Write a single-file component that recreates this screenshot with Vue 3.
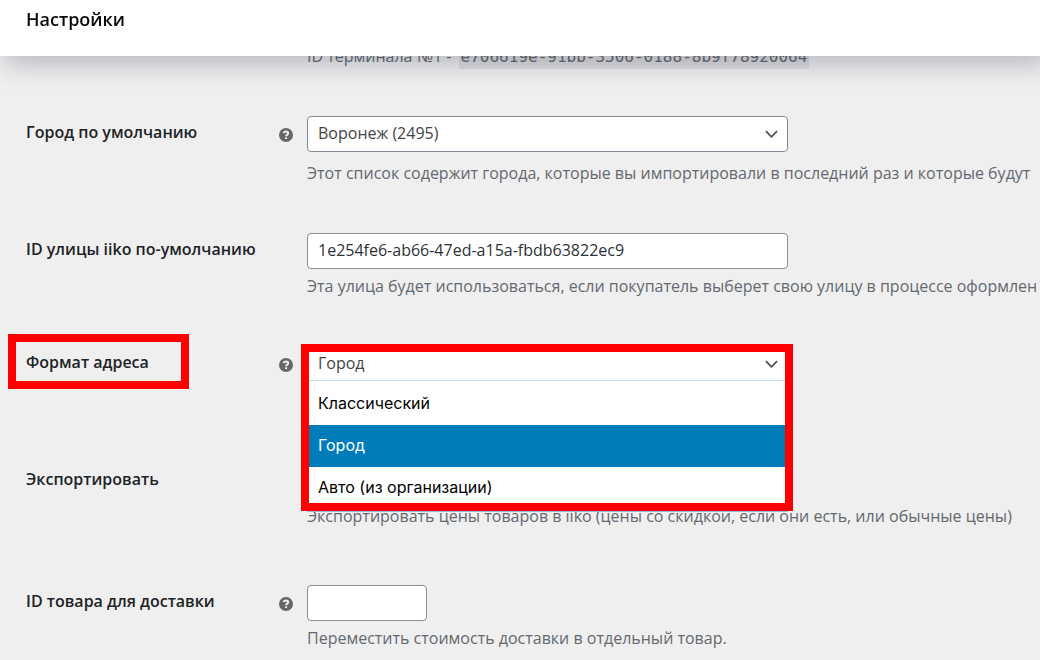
<script setup>
import { ref } from 'vue'

const terminalId = 'e706619e-91bb-3506-0188-8b9f78920064'
const city = ref('voronezh')
const street = ref('1e254fe6-ab66-47ed-a15a-fbdb63822ec9')
const format = ref('city')
const product = ref('')
const formats = [
  { value: 'classic', label: 'Классический' },
  { value: 'city', label: 'Город' },
  { value: 'auto', label: 'Авто (из организации)' },
]
</script>

<template>
  <div class="page">
    <header class="topbar">
      <h1>Настройки</h1>
    </header>

    <form class="form" @submit.prevent>
      <div class="row">
        <p class="desc terminal">ID терминала №1 - <code>{{ terminalId }}</code></p>
      </div>

      <div class="row">
        <label class="name" for="city">Город по умолчанию</label>
        <button class="help" type="button" aria-label="Справка: город">
          <svg viewBox="0 0 14 14"><circle cx="7" cy="7" r="7" /><path d="M4.7 5.2C4.9 4 5.8 3.5 7 3.5s2.2.6 2.2 1.7c0 1.4-2.1 1.4-2.1 3M7.1 9.2v1.8" /></svg>
        </button>
        <div class="field">
          <div class="select">
            <select id="city" v-model="city">
              <option value="voronezh">Воронеж (2495)</option>
            </select>
            <svg class="chevron" viewBox="0 0 14 8"><path d="M1 1l6 6 6-6" /></svg>
          </div>
          <p class="desc after-select">Этот список содержит города, которые вы импортировали в последний раз и которые будут</p>
        </div>
      </div>

      <div class="row">
        <label class="name" for="street">ID улицы iiko по-умолчанию</label>
        <div class="field">
          <input id="street" v-model="street" type="text" />
          <p class="desc">Эта улица будет использоваться, если покупатель выберет свою улицу в процессе оформлен</p>
        </div>
      </div>

      <div class="row row-format">
        <label class="name marked" for="format">Формат адреса</label>
        <button class="help" type="button" aria-label="Справка: формат">
          <svg viewBox="0 0 14 14"><circle cx="7" cy="7" r="7" /><path d="M4.7 5.2C4.9 4 5.8 3.5 7 3.5s2.2.6 2.2 1.7c0 1.4-2.1 1.4-2.1 3M7.1 9.2v1.8" /></svg>
        </button>
        <div class="field">
          <div class="select open">
            <select id="format" v-model="format">
              <option v-for="f in formats" :key="f.value" :value="f.value">{{ f.label }}</option>
            </select>
            <svg class="chevron" viewBox="0 0 14 8"><path d="M1 1l6 6 6-6" /></svg>
            <ul class="menu" role="listbox" aria-label="Формат адреса">
              <li
                v-for="f in formats"
                :key="f.value"
                role="option"
                :aria-selected="f.value === format"
                :class="{ active: f.value === format }"
                @click="format = f.value"
              >{{ f.label }}</li>
            </ul>
          </div>
        </div>
      </div>

      <div class="row row-export">
        <span class="name">Экспортировать</span>
        <div class="field">
          <p class="desc">Экспортировать цены товаров в iiko (цены со скидкой, если они есть, или обычные цены)</p>
        </div>
      </div>

      <div class="row">
        <label class="name" for="product">ID товара для доставки</label>
        <button class="help" type="button" aria-label="Справка: товар">
          <svg viewBox="0 0 14 14"><circle cx="7" cy="7" r="7" /><path d="M4.7 5.2C4.9 4 5.8 3.5 7 3.5s2.2.6 2.2 1.7c0 1.4-2.1 1.4-2.1 3M7.1 9.2v1.8" /></svg>
        </button>
        <div class="field">
          <input id="product" v-model="product" class="short" type="text" />
          <p class="desc">Переместить стоимость доставки в отдельный товар.</p>
        </div>
      </div>
    </form>
  </div>
</template>

<style>
body {
  margin: 0;
  background: #efefef;
  overflow: hidden;
}
</style>

<style scoped>
.page {
  min-height: 100vh;
  overflow: hidden;
  background: #efefef;
  color: #1d2327;
  font: 16px/24px "Open Sans", "Noto Sans", sans-serif;
}
.topbar {
  position: fixed;
  z-index: 5;
  top: 0;
  left: 0;
  right: 0;
  height: 56px;
  padding: 0 26px;
  box-sizing: border-box;
  background: #fff;
  box-shadow: 6px 6px 26px 2px rgba(40, 44, 70, 0.28);
}
h1 {
  margin: 0;
  color: #0a0a0a;
  font-size: 18px;
  font-weight: 600;
  line-height: 38px;
}
.form {
  padding: 45px 0 9px 26px;
}
.row {
  display: grid;
  grid-template-columns: 253px 28px minmax(0, 1fr);
  align-items: start;
  margin-bottom: 47px;
}
.row:last-child {
  margin-bottom: 0;
}
.row-format {
  min-height: 70px;
}
.row-export {
  min-height: 75px;
}
.row-export .desc {
  margin-top: 41px;
}
.name {
  grid-column: 1;
  justify-self: start;
  margin-top: 4px;
  font-weight: 600;
  white-space: nowrap;
}
.marked {
  position: relative;
}
.marked::after {
  content: "";
  position: absolute;
  top: -16px;
  left: -18px;
  width: 165px;
  height: 39px;
  border: 8px solid #f00;
}
.help {
  grid-column: 2;
  width: 14px;
  height: 14px;
  margin-top: 12px;
  padding: 0;
  border: 0;
  background: none;
}
.help svg {
  display: block;
  width: 14px;
  height: 14px;
  fill: #666;
}
.help path {
  fill: none;
  stroke: #efefef;
  stroke-width: 2;
}
.field {
  grid-column: 3;
}
.desc {
  margin: 5px 0 1px;
  color: #646970;
  white-space: nowrap;
}
.after-select {
  margin-top: 9px;
}
.terminal {
  grid-column: 3;
  margin: -1px 0 1px;
}
code {
  margin-left: 3px;
  padding: 4px 2px 3px;
  background: #dfdfdf;
  font: 16px/19px "DejaVu Sans Mono", monospace;
}
input,
select {
  display: block;
  box-sizing: border-box;
  width: 100%;
  height: 36px;
  margin: 0;
  padding: 0 10px 2px;
  border: 1px solid #8c8f94;
  border-radius: 4px;
  outline: 0;
  background: #fff;
  color: #2c3338;
  font: inherit;
  appearance: none;
}
input {
  max-width: 481px;
}
select {
  border-color: #7e8993;
  color: #444;
}
.short {
  max-width: 120px;
}
.select {
  position: relative;
  max-width: 481px;
}
.chevron {
  position: absolute;
  top: 14px;
  right: 10px;
  width: 13px;
  height: 8px;
  fill: none;
  stroke: #555;
  stroke-width: 2;
  pointer-events: none;
}
.open::after {
  content: "";
  position: absolute;
  z-index: 3;
  top: -2px;
  left: -6px;
  right: -5px;
  height: 151px;
  border: 8px solid #f00;
  pointer-events: none;
}
.menu {
  position: absolute;
  z-index: 2;
  top: 34px;
  left: 0;
  right: 0;
  margin: 0;
  padding: 2px 0;
  border: 1px solid #bfe0ea;
  border-bottom-color: #8fc0da;
  background: #fff;
  color: #000;
  font-family: Inter, sans-serif;
  list-style: none;
}
.menu li {
  padding: 8px 10px 10px;
}
.menu .active {
  background: #007cba;
  color: #fff;
}
</style>
